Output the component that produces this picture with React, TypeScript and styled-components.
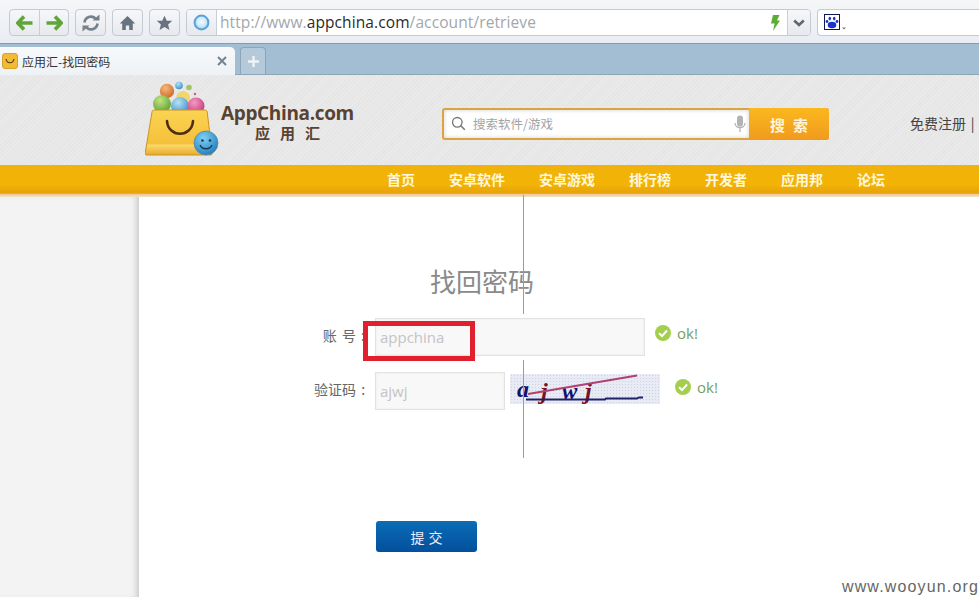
import React from "react";
import styled, { createGlobalStyle } from "styled-components";

const Global = createGlobalStyle`
  html, body { margin: 0; padding: 0; background: #fff; overflow: hidden; }
  body { font-family: "Open Sans", "Noto Sans CJK SC", sans-serif; }
  #root { width: 979px; height: 597px; position: relative; overflow: hidden; }
`;

const cjk = `"Noto Sans CJK SC", "Liberation Sans", sans-serif`;

const Page = styled.div`
  width: 979px; height: 597px; display: flex; flex-direction: column; position: relative; overflow: hidden;
`;
const Toolbar = styled.div`
  height: 44px; flex: none; display: flex; align-items: flex-start; gap: 6px;
  padding: 9px 0 0 9px; box-sizing: border-box;
  background: linear-gradient(#f5f6f8, #e9edf3);
  border-bottom: 1px solid #7f9db5;
`;
const ButtonGroup = styled.div`
  display: flex; height: 27px; box-sizing: border-box; flex: none;
  border: 1px solid #c3cad2; border-radius: 4px;
  background: linear-gradient(#f6f7f9, #e6e9ee);
`;
const ToolButton = styled.div<{ $w?: number; $divide?: boolean }>`
  width: ${p => p.$w ?? 29}px; box-sizing: border-box; display: flex; align-items: center; justify-content: center;
  border-left: ${p => (p.$divide ? "1px solid #c8ced5" : "none")};
`;
const UrlBar = styled.div`
  width: 625px; height: 27px; flex: none; display: flex; box-sizing: border-box;
  border: 1px solid #c3cad2; border-radius: 4px; background: #fff; overflow: hidden;
`;
const Globe = styled.div`
  width: 29px; flex: none; display: flex; align-items: center; justify-content: center;
  background: linear-gradient(#f6f7f9, #e6e9ee); border-right: 1px solid #c8ced5;
`;
const UrlText = styled.div`
  flex: 1; padding-left: 3px; font-size: 15.5px; line-height: 25px; color: #a3a7ab; letter-spacing: .1px; white-space: nowrap;
  b { color: #2a2a2a; font-weight: 400; }
`;
const Bolt = styled.div`
  width: 25px; display: flex; align-items: center; justify-content: center; flex: none;
`;
const Chevron = styled.div`
  width: 22px; flex: none; display: flex; align-items: center; justify-content: center;
  background: linear-gradient(#f6f7f9, #e6e9ee); border-left: 1px solid #c8ced5;
`;
const SearchBar = styled.div`
  flex: 1; height: 27px; box-sizing: border-box; padding-left: 6px; display: flex; align-items: center;
  border: 1px solid #c3cad2; border-right: none; border-radius: 4px 0 0 4px; background: #fff;
`;

const TabBar = styled.div`
  height: 31px; flex: none; display: flex; align-items: flex-end; gap: 5px;
  background: #a3bdd2; border-bottom: 1px solid #8ea5b6; box-sizing: border-box;
`;
const ActiveTab = styled.div`
  width: 235px; height: 28px; flex: none; box-sizing: border-box; display: flex; align-items: center; padding: 0 8px 0 2px;
  margin-bottom: -1px; background: linear-gradient(#f7f9fb, #eef2f5); border-radius: 0 5px 0 0;
  font: 12px ${cjk}; color: #333;
`;
const Favicon = styled.div`
  width: 16px; height: 16px; flex: none; border-radius: 3px; background: #f2bb35; border: 1px solid #d9a02a; box-sizing: border-box;
  display: flex; align-items: center; justify-content: center; margin-right: 4px;
`;
const TabTitle = styled.span`flex: 1; white-space: nowrap;`;
const NewTab = styled.div`
  width: 26px; height: 27px; flex: none; box-sizing: border-box; display: flex; align-items: center; justify-content: center;
  border: 1px solid #8ea5b6; border-bottom: none; border-radius: 4px 4px 0 0; background: #b4c9da;
`;

const Header = styled.div`
  height: 90px; flex: none; display: flex; align-items: flex-start; box-sizing: border-box; padding-left: 145px;
  background: repeating-linear-gradient(135deg, #ebebeb 0 1px, #e6e6e6 1px 3px);
  white-space: nowrap;
`;
const Logo = styled.div`
  width: 297px; flex: none; display: flex; padding-top: 6px; box-sizing: border-box;
`;
const Brand = styled.div`
  display: flex; flex-direction: column; align-items: center; padding-top: 20px; color: #5a4231;
`;
const BrandName = styled.div`
  font: 700 19px/24px "Open Sans", sans-serif; letter-spacing: -.35px;
`;
const BrandSub = styled.div`
  font: 700 15px/15px ${cjk}; letter-spacing: 10px; padding-left: 10px;
`;
const SearchBox = styled.div`
  width: 387px; height: 32px; margin-top: 33px; flex: none; display: flex; box-sizing: border-box;
  border: 2px solid #dba43e; border-radius: 3px; background: #fff;
`;
const SearchField = styled.div`
  flex: 1; display: flex; align-items: center; padding: 0 3px 1px 7px; gap: 7px;
  box-shadow: inset 0 0 4px #cfcfcf;
  font: 12.5px ${cjk}; color: #a3a3a3;
`;
const SearchLabel = styled.span`flex: 1;`;
const SearchButton = styled.div`
  width: 80px; margin: -2px -2px -2px 0; flex: none; display: flex; align-items: center; justify-content: center;
  border-radius: 0 3px 3px 0; background: linear-gradient(#fbb81e, #f09a1e);
  font: 700 15px ${cjk}; color: #fff3d8; letter-spacing: 8px; padding-left: 8px; box-sizing: border-box;
`;
const UserLinks = styled.div`
  margin: 39px 0 0 81px; flex: none; font: 14px/18px ${cjk}; color: #444; word-spacing: 1.5px;
`;

const Nav = styled.nav`
  height: 32px; flex: none; display: flex; gap: 34px; align-items: center; box-sizing: border-box; padding: 0 0 4px 387px;
  background: linear-gradient(#f0b20c 0, #f3b404 60%, #e8a10c 88%, #eccb9b 92%, #f4e3cc 100%);
  font: 700 14px ${cjk}; color: #fff7df; white-space: nowrap;
`;

const Body = styled.div`
  flex: 1; display: flex; min-height: 0;
`;
const Gutter = styled.div`
  width: 139px; flex: none; background: #f3f3f3; box-shadow: inset -6px 0 6px -4px #c4c4c4;
`;
const Main = styled.main`
  flex: 1; background: #fff; padding: 68px 0 0 175px; box-sizing: border-box; display: flex; flex-direction: column; align-items: flex-start;
`;
const Title = styled.h1`
  margin: 0 0 21px 116px; font: 400 26px/32px ${cjk}; color: #8a8a8a;
`;
const Row = styled.div<{ $mb?: number }>`
  display: flex; align-items: flex-start; margin-bottom: ${p => p.$mb ?? 16}px;
`;
const Label = styled.label`
  width: 61px; padding: 8px 10px 0 0; flex: none; font: 14px/18px ${cjk}; color: #666; text-align: right; white-space: pre; word-spacing: 2px; box-sizing: border-box;
`;
const Field = styled.div<{ $w: number }>`
  width: ${p => p.$w}px; height: 38px; flex: none; box-sizing: border-box; padding: 0 4px;
  border: 1px solid #e2e2e2; background: #f8f8f8; box-shadow: inset 0 0 3px #ececec;
  font: 15px/37px "Open Sans", sans-serif; color: #c4c4c4;
`;
const Captcha = styled.div`
  width: 150px; height: 30px; margin: 2px 15px 0 5px; flex: none;
  background-color: #e8eaf4;
  background-image: radial-gradient(#cdd1e3 0.6px, transparent 0.8px);
  background-size: 3px 3px;
`;
const Ok = styled.div<{ $ml?: number }>`
  display: flex; align-items: center; gap: 6px; margin: 6px 0 0 ${p => p.$ml ?? 0}px; height: 18px;
  font: 15px "Open Sans", sans-serif; color: #74a05e;
`;
const Submit = styled.button`
  width: 101px; height: 31px; margin: 111px 0 0 62px; padding: 0 0 0 4px; border: none; border-radius: 3px;
  background: linear-gradient(#0b6cb6, #03509c);
  font: 14px ${cjk}; color: #eef; letter-spacing: 4px;
`;

const VLine = styled.div<{ $top: number; $h: number }>`
  position: absolute; left: 523px; top: ${p => p.$top}px; height: ${p => p.$h}px; width: 1px; background: #9a9aa0;
`;
const RedMark = styled.div`
  position: absolute; left: 363px; top: 321px; width: 112px; height: 40px; box-sizing: border-box; border: 5px solid #e0202c;
`;
const Watermark = styled.div`
  position: absolute; right: 0; bottom: 1px; font: 16px/18px "Liberation Sans", sans-serif; letter-spacing: 1.15px; color: #666;
`;

const Arrow = ({ flip }: { flip?: boolean }) => (
  <svg width="17" height="16" viewBox="0 0 17 16" style={{ transform: flip ? "scaleX(-1)" : undefined }}>
    <path d="M8 1.5 1.8 8 8 14.5M2.5 8H16.5" fill="none" stroke="#5fa639" strokeWidth="3.6" />
  </svg>
);
const Reload = () => (
  <svg width="20" height="18" viewBox="0 0 20 18">
    <path d="M3.5 8.5a6.5 6.5 0 0 1 11-4" fill="none" stroke="#77818b" strokeWidth="2.6" />
    <path d="M16.5 9.5a6.5 6.5 0 0 1-11 4" fill="none" stroke="#77818b" strokeWidth="2.6" />
    <path d="M11.5 6.5h7v-6zM8.5 11.5h-7v6z" fill="#77818b" />
  </svg>
);
const Home = () => (
  <svg width="17" height="16" viewBox="0 0 17 16">
    <path d="M8.5 1 0.8 8.5h2.4V15h3.6v-4.5h3.4V15h3.6V8.5h2.4z" fill="#68737f" />
  </svg>
);
const Star = () => (
  <svg width="17" height="16" viewBox="0 0 17 16">
    <path d="M8.5.7l2.3 5h5.5l-4.2 3.7 1.4 5.6-5-3-5 3 1.4-5.6L.7 5.7h5.5z" fill="#68737f" />
  </svg>
);
const GlobeIcon = () => (
  <svg width="17" height="17" viewBox="0 0 17 17">
    <defs>
      <radialGradient id="g1" cx=".5" cy=".45" r=".6">
        <stop offset="0" stopColor="#f2fbff" />
        <stop offset=".6" stopColor="#c9e8f8" />
        <stop offset="1" stopColor="#7ab9e6" />
      </radialGradient>
    </defs>
    <circle cx="8.5" cy="8.5" r="6.9" fill="url(#g1)" stroke="#5ba2dc" strokeWidth="2" />
  </svg>
);
const BoltIcon = () => (
  <svg width="10" height="16" viewBox="0 0 10 16">
    <path d="M3 0h6.5L7 5.5h3L3 16l1.6-7.5H1z" fill="#5cad35" />
  </svg>
);
const ChevronIcon = () => (
  <svg width="12" height="8" viewBox="0 0 12 8">
    <path d="M1.2 1.5 6 6l4.8-4.5" fill="none" stroke="#5f6872" strokeWidth="2.6" />
  </svg>
);
const Paw = () => (
  <svg width="23" height="17" viewBox="0 0 23 17">
    <rect x=".5" y=".5" width="15" height="15" fill="#fff" stroke="#101850" />
    <g fill="#1c35c8">
      <ellipse cx="8" cy="11" rx="4.3" ry="3.2" />
      <ellipse cx="5.8" cy="4.6" rx="1.3" ry="1.8" />
      <ellipse cx="10.2" cy="4.6" rx="1.3" ry="1.8" />
      <circle cx="3" cy="7.5" r="1.4" />
      <circle cx="13" cy="7.5" r="1.4" />
    </g>
    <path d="M18 13.5h4l-2 2z" fill="#777" />
  </svg>
);
const CloseIcon = () => (
  <svg width="10" height="10" viewBox="0 0 10 10">
    <path d="M1 1l8 8M9 1 1 9" stroke="#75828f" strokeWidth="2" />
  </svg>
);
const PlusIcon = () => (
  <svg width="11" height="11" viewBox="0 0 11 11">
    <path d="M5.5 0v11M0 5.5h11" stroke="#eef3f8" strokeWidth="2.4" />
  </svg>
);
const FaviconSmile = () => (
  <svg width="10" height="6" viewBox="0 0 10 6">
    <path d="M1 1c1 5 7 5 8 0" fill="none" stroke="#5b3a10" strokeWidth="1.2" />
  </svg>
);
const Magnifier = () => (
  <svg width="15" height="15" viewBox="0 0 15 15">
    <circle cx="6.3" cy="6.3" r="4.8" fill="none" stroke="#777" strokeWidth="1.3" />
    <path d="M9.8 9.8l4 4" stroke="#777" strokeWidth="1.6" />
  </svg>
);
const Mic = () => (
  <svg width="12" height="18" viewBox="0 0 12 18">
    <rect x="3" y="0.5" width="6" height="11" rx="3" fill="#b3b3b3" />
    <path d="M1 8c0 6 10 6 10 0M6 13v4" fill="none" stroke="#b3b3b3" strokeWidth="1.3" />
  </svg>
);
const CheckCircle = () => (
  <svg width="16" height="16" viewBox="0 0 16 16">
    <circle cx="8" cy="8" r="8" fill="#a4cf4e" />
    <path d="M4 8.3l3 2.8 5-5.6" fill="none" stroke="#fff" strokeWidth="2" />
  </svg>
);
const BagLogo = () => (
  <svg width="76" height="77" viewBox="0 0 76 77" style={{ flex: "none" }}>
    <defs>
      <linearGradient id="bag" x1="0" y1="0" x2="0" y2="1">
        <stop offset="0" stopColor="#fbd453" />
        <stop offset=".75" stopColor="#f5c03a" />
        <stop offset=".78" stopColor="#fbd96a" />
        <stop offset="1" stopColor="#e9a92a" />
      </linearGradient>
      <radialGradient id="smile" cx=".4" cy=".3" r=".8">
        <stop offset="0" stopColor="#7fd0f2" />
        <stop offset="1" stopColor="#1a76b8" />
      </radialGradient>
      <radialGradient id="bl1" cx=".4" cy=".3" r=".8"><stop offset="0" stopColor="#c5e37e" /><stop offset="1" stopColor="#4f9a30" /></radialGradient>
      <radialGradient id="bl2" cx=".4" cy=".3" r=".8"><stop offset="0" stopColor="#b7e2f5" /><stop offset="1" stopColor="#2f86c5" /></radialGradient>
      <radialGradient id="bl3" cx=".4" cy=".3" r=".8"><stop offset="0" stopColor="#f59ac2" /><stop offset="1" stopColor="#c02c78" /></radialGradient>
      <radialGradient id="bl4" cx=".4" cy=".3" r=".8"><stop offset="0" stopColor="#f5b97a" /><stop offset="1" stopColor="#c95f22" /></radialGradient>
    </defs>
    <circle cx="22" cy="10" r="7.2" fill="url(#bl4)" />
    <circle cx="34" cy="4.5" r="3.8" fill="url(#bl2)" />
    <circle cx="44" cy="6.5" r="2.8" fill="#a6c463" />
    <circle cx="38" cy="17" r="7" fill="#f0d66b" />
    <circle cx="50" cy="13" r="1.2" fill="#c05ea0" />
    <circle cx="17" cy="23" r="9" fill="url(#bl1)" />
    <circle cx="35" cy="25" r="9" fill="url(#bl2)" />
    <circle cx="51" cy="25" r="8.5" fill="url(#bl3)" />
    <path d="M7 31c0-1.500 1-2 2-2h51c1 0 2 .5 2.200 2l5 41c.2 1.500-.5 2-2 2H2c-1.500 0-2-.5-1.800-2z" fill="url(#bag)" stroke="#c99425" />
    <path d="M22 40c1 17 25 17 26 0" fill="none" stroke="#4a2f10" strokeWidth="2.6" strokeLinecap="round" />
    <circle cx="61" cy="62" r="12" fill="url(#smile)" stroke="#5f8a9a" strokeWidth=".8" />
    <circle cx="57.500" cy="59.500" r="1.300" fill="#143a60" />
    <circle cx="65" cy="59.500" r="1.300" fill="#143a60" />
    <path d="M55 64c2 5 10 5 12 0" fill="none" stroke="#143a60" strokeWidth="1.4" />
  </svg>
);
const CaptchaArt = () => (
  <svg width="150" height="30" viewBox="0 0 150 30">
    <text x="7" y="23" fontFamily="'Liberation Serif', serif" fontWeight="700" fontStyle="italic" fontSize="24" fill="#101070">a</text>
    <text x="31" y="25" fontFamily="'Liberation Serif', serif" fontWeight="700" fontStyle="italic" fontSize="24" fill="#7a1020">j</text>
    <text x="52" y="25" fontFamily="'Liberation Serif', serif" fontWeight="700" fontStyle="italic" fontSize="23" fill="#101070">w</text>
    <text x="75" y="25" fontFamily="'Liberation Serif', serif" fontWeight="700" fontStyle="italic" fontSize="24" fill="#7a1020">j</text>
    <path d="M16 25.500h79l1-1h31l2-1h4" fill="none" stroke="#20206a" strokeWidth="1.800" />
    <path d="M18 20 127 1.500" stroke="#b0406f" strokeWidth="1.800" />
  </svg>
);

export default function App() {
  return (
    <Page>
      <Global />
      <Toolbar>
        <ButtonGroup>
          <ToolButton $w={29}><Arrow /></ToolButton>
          <ToolButton $w={29} $divide><Arrow flip /></ToolButton>
        </ButtonGroup>
        <ButtonGroup><ToolButton><Reload /></ToolButton></ButtonGroup>
        <ButtonGroup><ToolButton><Home /></ToolButton></ButtonGroup>
        <ButtonGroup><ToolButton><Star /></ToolButton></ButtonGroup>
        <UrlBar>
          <Globe><GlobeIcon /></Globe>
          <UrlText>http://www.<b>appchina.com</b>/account/retrieve</UrlText>
          <Bolt><BoltIcon /></Bolt>
          <Chevron><ChevronIcon /></Chevron>
        </UrlBar>
        <SearchBar><Paw /></SearchBar>
      </Toolbar>
      <TabBar>
        <ActiveTab>
          <Favicon><FaviconSmile /></Favicon>
          <TabTitle>应用汇-找回密码</TabTitle>
          <CloseIcon />
        </ActiveTab>
        <NewTab><PlusIcon /></NewTab>
      </TabBar>
      <Header>
        <Logo>
          <BagLogo />
          <Brand>
            <BrandName>AppChina.com</BrandName>
            <BrandSub>应用汇</BrandSub>
          </Brand>
        </Logo>
        <SearchBox>
          <SearchField>
            <Magnifier />
            <SearchLabel>搜索软件/游戏</SearchLabel>
            <Mic />
          </SearchField>
          <SearchButton>搜索</SearchButton>
        </SearchBox>
        <UserLinks>免费注册 | 登录</UserLinks>
      </Header>
      <Nav>
        <span>首页</span>
        <span>安卓软件</span>
        <span>安卓游戏</span>
        <span>排行榜</span>
        <span>开发者</span>
        <span>应用邦</span>
        <span>论坛</span>
      </Nav>
      <Body>
        <Gutter />
        <Main>
          <Title>找回密码</Title>
          <Row>
            <Label>{"账 号 :"}</Label>
            <Field $w={270}>appchina</Field>
            <Ok $ml={10}><CheckCircle />ok!</Ok>
          </Row>
          <Row $mb={0}>
            <Label>{"验证码 :"}</Label>
            <Field $w={130}>ajwj</Field>
            <Captcha><CaptchaArt /></Captcha>
            <Ok><CheckCircle />ok!</Ok>
          </Row>
          <Submit>提交</Submit>
        </Main>
      </Body>
      <VLine $top={195} $h={119} />
      <VLine $top={360} $h={98} />
      <RedMark />
      <Watermark>www.wooyun.org</Watermark>
    </Page>
  );
}
